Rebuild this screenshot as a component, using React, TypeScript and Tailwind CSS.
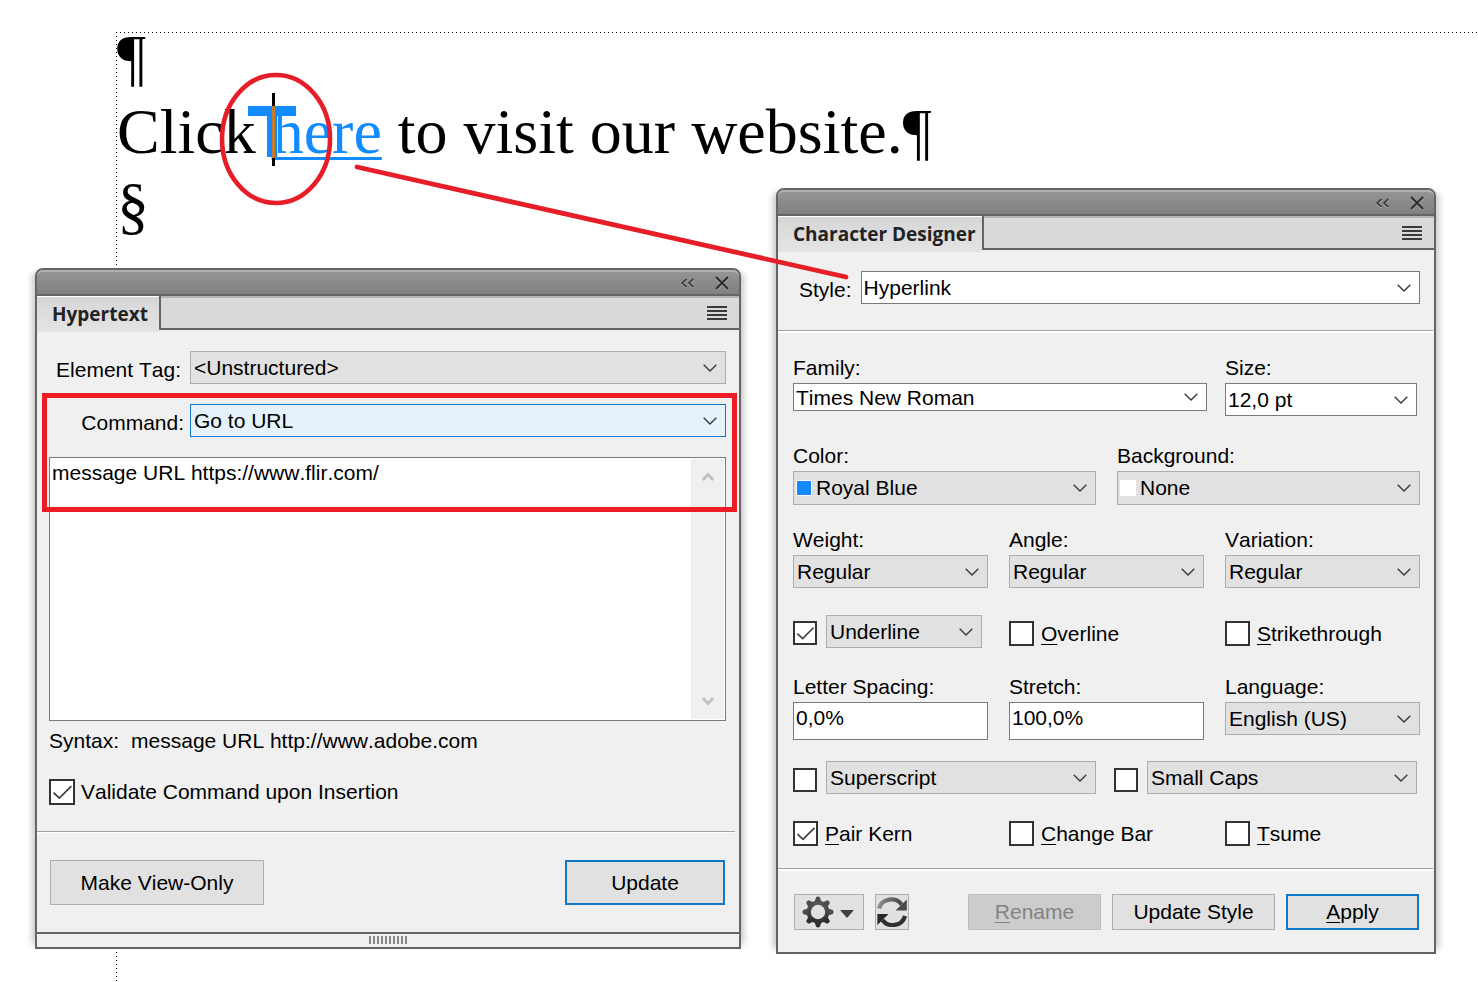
import { useId, type ReactNode } from "react";

function Chevron() {
  return (
    <svg
      viewBox="0 0 14 8"
      aria-hidden="true"
      className="pointer-events-none absolute right-[9px] top-1/2 h-[8px] w-[14px] -translate-y-1/2"
    >
      <path d="M0.7 0.7 L7 7 L13.3 0.7" fill="none" stroke="#3a3a3a" strokeWidth="1.4" />
    </svg>
  );
}

const tones = {
  gray: "border-[#adadad] bg-[#e1e1e1]",
  white: "border-[#7a7a7a] bg-white",
  active: "border-[#0f78c8] bg-[#e5f1fb]",
};

function Select(props: {
  value: string;
  id?: string;
  label?: string;
  tone?: keyof typeof tones;
  height?: string;
  className?: string;
  swatch?: string;
}) {
  const { value, id, label, tone = "gray", height = "h-[33px]", className = "", swatch } = props;
  return (
    <div className={`relative ${className}`}>
      <select
        id={id}
        aria-label={label}
        defaultValue={value}
        className={`block w-full appearance-none border pr-8 text-[21px] leading-6 outline-none ${height} ${tones[tone]} ${
          swatch ? "pl-[22px]" : tone === "white" ? "pl-[2px]" : "pl-[3px]"
        }`}
      >
        <option>{value}</option>
      </select>
      {swatch && (
        <span className={`absolute left-[3px] top-[9px] size-[16px] border border-white ${swatch}`} />
      )}
      <Chevron />
    </div>
  );
}

function Field({ label, children, className = "" }: { label: string; children: (id: string) => ReactNode; className?: string }) {
  const id = useId();
  return (
    <div className={className}>
      <label htmlFor={id} className="mb-[3px] block leading-6">
        {label}
      </label>
      {children(id)}
    </div>
  );
}

function Box({ id, checked = false, label, size = "size-[25px]" }: { id?: string; checked?: boolean; label?: string; size?: string }) {
  return (
    <span className={`relative block shrink-0 ${size}`}>
      <input
        id={id}
        type="checkbox"
        aria-label={label}
        defaultChecked={checked}
        className="peer block size-full appearance-none border-2 border-[#333] bg-white"
      />
      <svg
        viewBox="0 0 25 25"
        aria-hidden="true"
        className="pointer-events-none absolute inset-0 hidden size-full peer-checked:block"
      >
        <path d="M4.5 13.2 L10 18.3 L21.5 6.8" fill="none" stroke="#404040" strokeWidth="1.7" />
      </svg>
    </span>
  );
}

function Check({ hot, rest, checked }: { hot: string; rest: string; checked?: boolean }) {
  const id = useId();
  return (
    <div className="flex items-center gap-[7px]">
      <Box id={id} checked={checked} />
      <label htmlFor={id} className="leading-6">
        <Hot>{hot}</Hot>
        {rest}
      </label>
    </div>
  );
}

function Hot({ children }: { children: ReactNode }) {
  return <span className="underline decoration-1 underline-offset-3">{children}</span>;
}

function Divider({ className = "" }: { className?: string }) {
  return <div className={`border-b border-t border-b-white border-t-[#a0a0a0] ${className}`} />;
}

function Palette({ title, children, className = "" }: { title: string; children: ReactNode; className?: string }) {
  return (
    <section
      aria-label={title}
      className={`relative rounded-t-lg border-2 border-[#646464] bg-[#f0f0f0] shadow-[8px_0_6px_-5px_rgba(0,0,0,0.22),-8px_0_6px_-5px_rgba(0,0,0,0.22)] ${className}`}
    >
      <header className="flex h-[26px] items-center justify-end gap-[21px] rounded-t-md border-b-2 border-t-2 border-b-[#646464] border-t-[#b0b0b0] bg-linear-to-b from-[#949494] to-[#808080] pr-[10px]">
        <button aria-label={`Collapse ${title}`} className="h-[14px]">
          <svg viewBox="0 0 13 14" className="h-[14px] w-[13px]" fill="none" strokeWidth="1.6">
            <path d="M5.5 4 L1.2 8 L5.5 12 M12.2 4 L8 8 L12.2 12" stroke="#b5b5b5" />
            <path d="M5.5 3 L1.2 7 L5.5 11 M12.2 3 L8 7 L12.2 11" stroke="#333" />
          </svg>
        </button>
        <button aria-label={`Close ${title}`} className="h-[14px]">
          <svg viewBox="0 0 14 14" className="size-[14px]" fill="none" strokeWidth="2">
            <path d="M1 2.5 L13 14 M13 2.5 L1 14" stroke="#aaa" />
            <path d="M1 1 L13 13 M13 1 L1 13" stroke="#2c2c2c" />
          </svg>
        </button>
      </header>
      <div className="flex h-[36px] items-start">
        <h2 className="flex h-full min-w-[122px] items-center border-t border-white bg-linear-to-b from-[#d6d6d6] to-[#e4e4e4] pl-[15px] pr-[6px] font-['Open_Sans',sans-serif] text-[19px] font-bold text-[#222]">
          {title}
        </h2>
        <div className="flex h-[34px] flex-1 items-center justify-end border-b-2 border-l-2 border-[#646464] bg-[#d9d9d9] pr-[12px] pt-[2px] shadow-[inset_0_2px_0_#b4b4b4]">
          <button aria-label={`${title} menu`} className="h-[14px]">
            <svg viewBox="0 0 20 14" className="h-[14px] w-[20px]" fill="#3a3a3a">
              <path d="M0 0h20v2H0z M0 4h20v2H0z M0 8h20v2H0z M0 12h20v2H0z" />
            </svg>
          </button>
        </div>
      </div>
      {children}
    </section>
  );
}

const buttonBase = "flex items-center justify-center leading-6";
const plainButton = "border border-[#adadad] bg-[#e1e1e1]";
const defaultButton = "border-2 border-[#0f78c8] bg-[#e1e1e1]";

function HypertextPalette() {
  const syntax = "message URL http://www.adobe.com";
  return (
    <Palette title="Hypertext" className="mt-[80px]">
      <div className="relative pl-[12px] pr-[13px]">
        <div className="grid grid-cols-[auto_1fr] items-center gap-x-[6px] gap-y-[20px] pt-[19px]">
          <label htmlFor="element-tag" className="w-[135px] pr-[3px] pt-[4px] text-right leading-6">
            Element Tag:
          </label>
          <Select id="element-tag" value="<Unstructured>" />
          <label htmlFor="command" className="w-[135px] pt-[4px] text-right leading-6">
            Command:
          </label>
          <Select id="command" value="Go to URL" tone="active" />
        </div>
        <div className="relative mt-[20px]">
          <textarea
            aria-label="Command text"
            defaultValue="message URL https://www.flir.com/"
            className="block h-[264px] w-full resize-none overflow-hidden border border-[#7a7a7a] bg-white py-[3px] pl-[2px] pr-[38px] text-[21px] leading-6 outline-none"
          />
          <div className="absolute bottom-[2px] right-[2px] top-[2px] flex w-[33px] flex-col items-center justify-between bg-[#f0f0f0] py-[13px]">
            <svg viewBox="0 0 12 10" className="h-[10px] w-[12px]" aria-hidden="true">
              <path d="M0.8 8 L6 2.5 L11.2 8" fill="none" stroke="#bfbfbf" strokeWidth="2.8" />
            </svg>
            <svg viewBox="0 0 12 10" className="h-[10px] w-[12px]" aria-hidden="true">
              <path d="M0.8 2 L6 7.5 L11.2 2" fill="none" stroke="#bfbfbf" strokeWidth="2.8" />
            </svg>
          </div>
        </div>
        <p className="mt-[8px] flex gap-3 leading-6">
          <span>Syntax:</span>
          <span>{syntax}</span>
        </p>
        <div className="mt-[26px] flex items-center gap-[6px]">
          <Box id="validate" checked size="size-[26px]" />
          <label htmlFor="validate" className="leading-6">
            Validate Command upon Insertion
          </label>
        </div>
        <div
          aria-hidden="true"
          className="pointer-events-none absolute left-[5px] right-[2px] top-[61px] h-[119px] border-5 border-[#ec1c24]"
        />
      </div>
      <Divider className="mr-[4px] mt-[26px]" />
      <div className="flex justify-between pb-[27px] pl-[13px] pr-[14px] pt-[27px]">
        <button className={`h-[45px] w-[214px] ${buttonBase} ${plainButton}`}>Make View-Only</button>
        <button className={`h-[45px] w-[160px] ${buttonBase} ${defaultButton}`}>Update</button>
      </div>
      <footer className="flex h-[15px] justify-center border-t-2 border-[#646464] pt-[2px]">
        <svg viewBox="0 0 38 8" className="h-[8px] w-[38px]" fill="#868686" aria-hidden="true">
          {Array.from({ length: 10 }, (_, i) => (
            <rect key={i} x={i * 4} y="0" width="2" height="8" />
          ))}
        </svg>
      </footer>
    </Palette>
  );
}

function GearIcon() {
  return (
    <svg viewBox="-16 -16 32 32" className="size-[32px]" aria-hidden="true">
      <defs>
        <linearGradient id="gear" x1="0" y1="0" x2="0" y2="1">
          <stop offset="0" stopColor="#5a5a5a" />
          <stop offset="1" stopColor="#2c2c2c" />
        </linearGradient>
        <mask id="gear-hole" maskUnits="userSpaceOnUse" x="-16" y="-16" width="32" height="32">
          <rect x="-16" y="-16" width="32" height="32" fill="white" />
          <circle r="7.2" fill="black" />
        </mask>
      </defs>
      <g mask="url(#gear-hole)" fill="url(#gear)">
        <circle r="11.4" />
        {[0, 45, 90, 135, 180, 225, 270, 315].map((a) => (
          <path
            key={a}
            d="M-3.4 -10 L-1.9 -14.8 Q0 -16.2 1.9 -14.8 L3.4 -10z"
            fill={a > 90 && a < 270 ? "#303030" : "#4c4c4c"}
            transform={`rotate(${a})`}
          />
        ))}
      </g>
    </svg>
  );
}

function RefreshIcon() {
  return (
    <svg viewBox="0 0 30 30" className="size-[30px]" aria-hidden="true">
      <defs>
        <linearGradient id="arc-top" x1="0" y1="0" x2="1" y2="0">
          <stop offset="0" stopColor="#8a8a8a" />
          <stop offset="1" stopColor="#4a4a4a" />
        </linearGradient>
      </defs>
      <g fill="none" strokeWidth="4.2">
        <path d="M2 11.5 C5 1 19 -0.5 24.5 7.5" stroke="url(#arc-top)" />
        <path d="M28 19 C25 29.5 11 31 5.5 23" stroke="#303030" />
      </g>
      <path d="M29.8 2.5 V13.5 H18.5z" fill="#4a4a4a" />
      <path d="M0.4 28 V17 H11.5z" fill="#282828" />
    </svg>
  );
}

const inputClass =
  "block h-[38px] w-full border border-[#7a7a7a] bg-white pb-[6px] pl-[2px] text-[21px] leading-6 outline-none";

function CharacterDesigner() {
  return (
    <Palette title="Character Designer">
      <div className="flex items-center gap-[9px] pl-[21px] pr-[14px] pt-[19px]">
        <label htmlFor="style" className="pt-[4px] leading-6">
          Style:
        </label>
        <Select id="style" value="Hyperlink" tone="white" className="flex-1" />
      </div>
      <Divider className="mr-px mt-[26px] border-b-2" />

      <div className="pl-[15px] pr-[14px] pt-[23px]">
        <div className="grid grid-cols-[414fr_195fr] gap-x-[18px]">
          <Field label="Family:">
            {(id) => <Select id={id} value="Times New Roman" tone="white" height="h-[28px] pt-[2px]" />}
          </Field>
          <Field label="Size:" className="pr-[3px]">
            {(id) => <Select id={id} value="12,0 pt" tone="white" />}
          </Field>
        </div>

        <div className="mt-[28px] grid grid-cols-2 gap-x-[21px]">
          <Field label="Color:">
            {(id) => <Select id={id} value="Royal Blue" height="h-[34px]" swatch="bg-[#118bff]" />}
          </Field>
          <Field label="Background:">
            {(id) => <Select id={id} value="None" height="h-[34px]" swatch="bg-white" />}
          </Field>
        </div>

        <div className="mt-[23px] grid grid-cols-3 gap-x-[21px]">
          <Field label="Weight:">{(id) => <Select id={id} value="Regular" />}</Field>
          <Field label="Angle:">{(id) => <Select id={id} value="Regular" />}</Field>
          <Field label="Variation:">{(id) => <Select id={id} value="Regular" />}</Field>
        </div>

        <div className="mt-[27px] grid grid-cols-3 gap-x-[21px]">
          <div className="flex items-center gap-[9px] pr-[6px]">
            <div className="pt-[2px]">
              <Box checked label="Apply line" size="size-[24px]" />
            </div>
            <Select value="Underline" label="Line style" className="flex-1" />
          </div>
          <div className="flex items-center pt-[4px]">
            <Check hot="O" rest="verline" />
          </div>
          <div className="flex items-center pt-[4px]">
            <Check hot="S" rest="trikethrough" />
          </div>
        </div>

        <div className="mt-[27px] grid grid-cols-3 gap-x-[21px]">
          <Field label="Letter Spacing:">
            {(id) => <input id={id} defaultValue="0,0%" className={inputClass} />}
          </Field>
          <Field label="Stretch:">
            {(id) => <input id={id} defaultValue="100,0%" className={inputClass} />}
          </Field>
          <Field label="Language:">{(id) => <Select id={id} value="English (US)" />}</Field>
        </div>

        <div className="mt-[21px] grid grid-cols-2 gap-x-[18px] pr-[3px]">
          <div className="flex items-end gap-[9px]">
            <div className="pb-[2px]">
              <Box label="Apply position" size="size-[24px]" />
            </div>
            <Select value="Superscript" label="Position" className="flex-1" />
          </div>
          <div className="flex items-end gap-[9px]">
            <div className="pb-[2px]">
              <Box label="Apply capitalization" size="size-[24px]" />
            </div>
            <Select value="Small Caps" label="Capitalization" className="flex-1" />
          </div>
        </div>

        <div className="mt-[27px] grid grid-cols-3 gap-x-[21px]">
          <Check hot="P" rest="air Kern" checked />
          <Check hot="C" rest="hange Bar" />
          <Check hot="T" rest="sume" />
        </div>
      </div>

      <Divider className="mr-px mt-[22px] border-b-2" />

      <div className="flex gap-[11px] pb-[22px] pl-[16px] pr-[15px] pt-[23px]">
        <button aria-label="Options" className={`h-[36px] w-[70px] gap-[6px] pr-[3px] ${buttonBase} ${plainButton}`}>
          <GearIcon />
          <svg viewBox="0 0 14 8" className="mt-[3px] h-[8px] w-[14px]" aria-hidden="true">
            <path d="M0 0h14L7 8z" fill="#404040" />
          </svg>
        </button>
        <button aria-label="Refresh" className={`h-[36px] w-[34px] ${buttonBase} ${plainButton}`}>
          <RefreshIcon />
        </button>
        <button disabled className={`ml-auto h-[36px] w-[133px] border border-[#bfbfbf] bg-[#ccc] text-[#838383] ${buttonBase}`}>
          <span>
            <Hot>R</Hot>ename
          </span>
        </button>
        <button className={`h-[36px] w-[163px] ${buttonBase} ${plainButton}`}>Update Style</button>
        <button className={`h-[36px] w-[133px] ${buttonBase} ${defaultButton}`}>
          <span>
            <Hot>A</Hot>pply
          </span>
        </button>
      </div>
    </Palette>
  );
}

function DocumentPage() {
  return (
    <div className="flex min-h-screen pl-[116px] pt-[32px]">
      <div className="flex-1 bg-[repeating-linear-gradient(to_right,#000_0_1px,transparent_1px_4px),repeating-linear-gradient(to_bottom,#000_0_1px,transparent_1px_4px)] bg-[size:100%_1px,1px_100%] bg-no-repeat">
        <article className="-mt-[11px] whitespace-nowrap pl-px font-['Liberation_Serif',serif] text-[64px] leading-[74px] text-black">
          <p>¶</p>
          <p>
            Click{" "}
            <a href="https://www.flir.com/" className="text-[#118bff] underline decoration-3 underline-offset-4">
              here
            </a>{" "}
            to visit our website.¶
          </p>
          <p>§</p>
        </article>
      </div>
    </div>
  );
}

export default function App() {
  return (
    <main className="relative min-h-screen overflow-hidden bg-white font-['Liberation_Sans',sans-serif] text-[21px] text-black [font-kerning:none]">
      <DocumentPage />
      <div className="absolute inset-x-0 top-0 grid grid-cols-[706fr_660fr] items-start gap-x-[35px] pb-[28px] pl-[35px] pr-[42px] pt-[188px]">
        <HypertextPalette />
        <CharacterDesigner />
      </div>
      <svg
        viewBox="0 0 900 300"
        aria-hidden="true"
        className="pointer-events-none absolute left-0 top-0 h-[300px] w-[900px]"
      >
        <path d="M248 106h48v10h-48z M267 115h10v42h-10z" fill="#118bff" />
        <path d="M277 116h1v40h-1z" fill="#b8dcff" />
        <path d="M272 93h3v73h-3z" fill="#000" />
        <path d="M272 106h3v52h-3z" fill="#c87a2c" />
        <ellipse cx="276" cy="139" rx="54" ry="64" fill="none" stroke="#e61e28" strokeWidth="4.6" />
        <path d="M357 167 L846 277" stroke="#e61e28" strokeWidth="4.8" strokeLinecap="round" />
      </svg>
    </main>
  );
}
